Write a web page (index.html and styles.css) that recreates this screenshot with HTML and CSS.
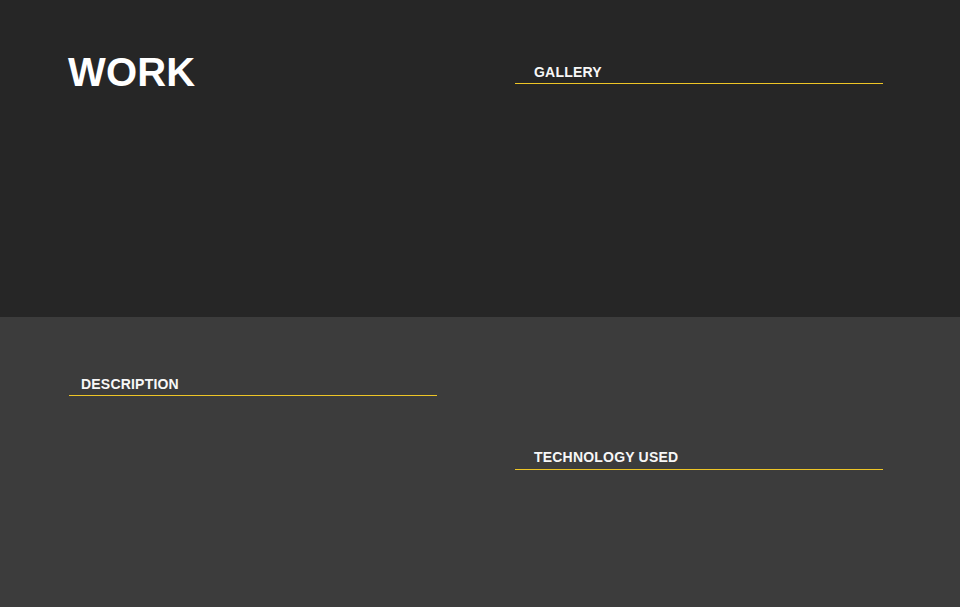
FILE: index.html
```html
<!DOCTYPE html>
<html lang="en">
<head>
<meta charset="utf-8">
<title>Work</title>
<link rel="stylesheet" href="styles.css">
</head>
<body>
  <section class="top">
    <h1 class="title">WORK</h1>
    <div class="gallery">
      <h2 class="heading heading--wide">GALLERY</h2>
    </div>
  </section>
  <section class="bottom">
    <div class="col-left">
      <h2 class="heading heading--narrow">DESCRIPTION</h2>
    </div>
    <div class="col-right">
      <h2 class="heading heading--wide heading--tech">TECHNOLOGY USED</h2>
    </div>
  </section>
</body>
</html>
```
FILE: styles.css
```css
* { box-sizing: border-box; }
html, body { margin: 0; padding: 0; }
body {
  font-family: "Liberation Sans", Arial, sans-serif;
  color: #ffffff;
  background: #3c3c3c;
}
.top {
  background: #262626;
  height: 317px;
  padding: 49px 0 0 68px;
  display: grid;
  grid-template-columns: 447px 368px;
  align-items: start;
}
.title {
  margin: 0;
  font-size: 40px;
  line-height: 46px;
  font-weight: bold;
  letter-spacing: 0.2px;
  color: #ffffff;
}
.gallery { padding-top: 15px; }
.heading {
  margin: 0;
  font-size: 14px;
  line-height: 16px;
  font-weight: bold;
  letter-spacing: 0.2px;
  color: #f7f7f7;
  padding-bottom: 3px;
  border-bottom: 1px solid #eec526;
}
.heading--wide { padding-left: 19px; }
.heading--narrow { padding-left: 12px; }
.heading--tech { padding-bottom: 4px; }
.bottom {
  background: #3c3c3c;
  height: 290px;
  padding: 59px 0 0 69px;
  display: grid;
  grid-template-columns: 368px 368px;
  column-gap: 78px;
  align-items: start;
}
.col-right { padding-top: 73px; }
```
